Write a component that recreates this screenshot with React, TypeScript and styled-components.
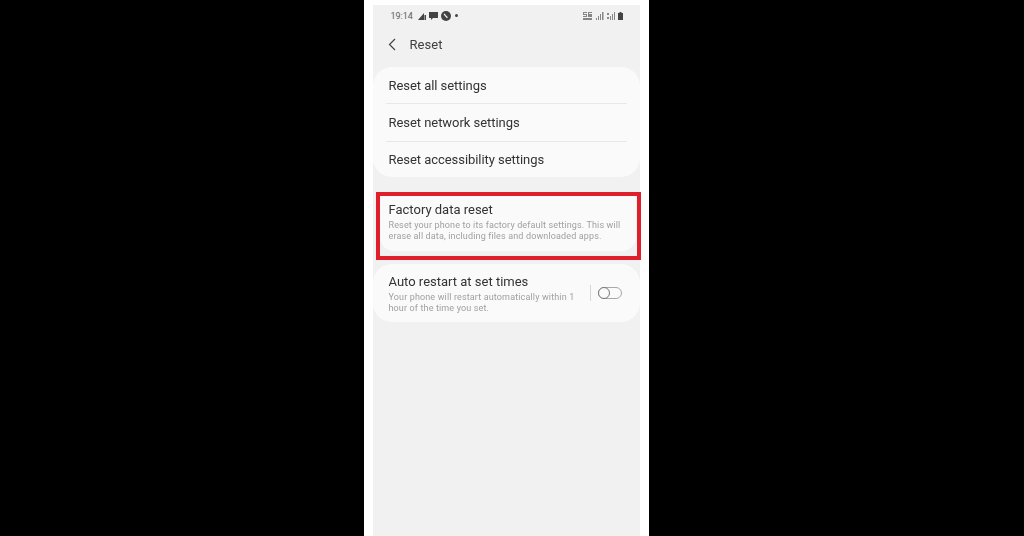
import React from "react";
import styled, { createGlobalStyle } from "styled-components";

const Global = createGlobalStyle`
  html, body { margin: 0; padding: 0; background: #000; }
  body { font-family: Roboto, "Liberation Sans", sans-serif; overflow: hidden; }
`;

const Page = styled.div`
  width: 1024px;
  height: 536px;
  background: #000;
  display: flex;
  justify-content: center;
  padding-right: 12px;
  box-sizing: border-box;
  overflow: hidden;
`;

const PhoneFrame = styled.div`
  width: 285px;
  height: 536px;
  background: #fff;
  padding: 5px 9px 0;
  box-sizing: border-box;
`;

const Screen = styled.div`
  height: 531px;
  background: #f1f1f1;
  display: flex;
  flex-direction: column;
  filter: blur(0.4px);
`;

const StatusBar = styled.div`
  height: 21px;
  display: flex;
  align-items: center;
  justify-content: space-between;
  padding: 0 17px 0 18px;
  color: #555;
  font-size: 9px;
`;

const StatusGroup = styled.div`
  display: flex;
  align-items: center;
  gap: 3px;
`;

const Clock = styled.span`
  margin-right: 2px;
  color: #5c5c5c;
`;

const Dot = styled.svg`
  display: block;
  fill: #444;
  margin-left: 1px;
`;

const Header = styled.div`
  height: 36px;
  display: flex;
  align-items: center;
  padding-left: 15px;
  gap: 14px;
  color: #3f3f3f;
  font-size: 13px;
  letter-spacing: 0.05px;
`;

const Card = styled.section`
  background: #fafafa;
  border-radius: 19px;
  display: flex;
  flex-direction: column;
`;

const TopCard = styled(Card)`
  margin-top: 5px;
  height: 110px;
  padding: 0 13px;
  box-sizing: border-box;
`;

const Row = styled.div<{ $divider?: boolean; $height: number }>`
  height: ${(p) => p.$height}px;
  box-sizing: border-box;
  display: flex;
  align-items: center;
  padding-left: 3px;
  font-size: 13px;
  letter-spacing: -0.05px;
  color: #333;
  border-top: ${(p) => (p.$divider ? "1px solid #e8e8e8" : "none")};
`;

const Highlight = styled.div`
  margin: 15px -1px 0 3px;
  height: 68px;
  border: 4px solid #e01f2d;
  box-sizing: border-box;
  background: #f1f1f1;
  display: flex;
  flex-direction: column;
`;

const FactoryCard = styled.div`
  height: 55px;
  margin-right: 1px;
  padding: 6px 8px 0 9px;
  box-sizing: border-box;
  background: #fafafa;
  border-radius: 0 0 14px 14px;
`;

const Title = styled.div`
  font-size: 13px;
  line-height: 16px;
  letter-spacing: 0;
  color: #333;
`;

const Description = styled.div`
  margin-top: 2px;
  font-size: 9px;
  line-height: 11px;
  letter-spacing: 0.14px;
  color: #9f9f9f;
`;

const AutoCard = styled(Card)`
  margin-top: 4px;
  height: 58px;
  padding: 10px 18px 0 16px;
  box-sizing: border-box;
  flex-direction: row;
  justify-content: space-between;
`;

const AutoText = styled.div`
  width: 190px;
`;

const ToggleArea = styled.div`
  display: flex;
  align-items: center;
  gap: 7px;
  height: 16px;
  margin-top: 11px;
`;

const Rule = styled.div`
  width: 1px;
  height: 16px;
  background: #d6d6d6;
`;

const Toggle = styled.div`
  position: relative;
  width: 24px;
  height: 12px;
  border: 1px solid #a8a8a8;
  border-radius: 7px;
  box-sizing: border-box;
`;

const Knob = styled.div`
  position: absolute;
  left: -1px;
  top: -1px;
  width: 12px;
  height: 12px;
  box-sizing: border-box;
  border: 1px solid #777;
  border-radius: 50%;
  background: #fafafa;
`;

const Icon = styled.svg<{ $faded?: boolean }>`
  display: block;
  fill: #444;
  opacity: ${(p) => (p.$faded ? 0.62 : 1)};
`;

export default function App() {
  return (
    <Page>
      <Global />
      <PhoneFrame>
        <Screen>
          <StatusBar>
            <StatusGroup>
              <Clock>19:14</Clock>
              <Icon width="8" height="8" viewBox="0 0 8 8"><path d="M0 8 L6 1 V8 Z" /><rect x="6.5" y="3" width="1.5" height="5" /></Icon>
              <Icon width="9" height="8" viewBox="0 0 9 8"><path d="M0 0 H9 V6 H4 L2 8 V6 H0 Z" /></Icon>
              <Icon width="10" height="10" viewBox="0 0 9 9"><circle cx="4.5" cy="4.5" r="4.5" /><path d="M2.8 2.5 L4 4.2 L5.8 6" stroke="#f1f1f1" strokeWidth="1.2" fill="none" /></Icon>
              <Dot width="3" height="3" viewBox="0 0 3 3"><circle cx="1.5" cy="1.5" r="1.5" /></Dot>
            </StatusGroup>
            <StatusGroup>
              <Icon $faded width="10" height="8" viewBox="0 0 10 8"><path d="M0 0h4v1H1v1h3v3H0V4h3V3H0zM5 0h4v1H6v1h3v3H5zM0 6h9v2H0z" /></Icon>
              <Icon $faded width="8" height="8" viewBox="0 0 8 8"><path d="M0 6h1v2H0zM2 4h1v4H2zM4 2h1v6H4zM6 0h1.5v8H6z" /></Icon>
              <Icon $faded width="8" height="8" viewBox="0 0 8 8"><path d="M0 1h2v2H0zM0 5h2v2H0zM3 4h1v4H3zM5 2h1v6H5zM7 0h1v8H7z" /></Icon>
              <Icon width="5" height="8" viewBox="0 0 5 8"><path d="M1.5 0h2v1H5v7H0V1h1.5z" /></Icon>
            </StatusGroup>
          </StatusBar>
          <Header>
            <svg width="8" height="13" viewBox="0 0 8 13" fill="none" stroke="#444" strokeWidth="1.2"><path d="M7 1 L1.5 6.5 L7 12" /></svg>
            <span>Reset</span>
          </Header>
          <TopCard>
            <Row $height={36}>Reset all settings</Row>
            <Row $height={38} $divider>Reset network settings</Row>
            <Row $height={36} $divider>Reset accessibility settings</Row>
          </TopCard>
          <Highlight>
            <FactoryCard>
              <Title>Factory data reset</Title>
              <Description>
                Reset your phone to its factory default settings. This will erase all data, including files and downloaded apps.
              </Description>
            </FactoryCard>
          </Highlight>
          <AutoCard>
            <AutoText>
              <Title>Auto restart at set times</Title>
              <Description>Your phone will restart automatically within 1 hour of the time you set.</Description>
            </AutoText>
            <ToggleArea>
              <Rule />
              <Toggle><Knob /></Toggle>
            </ToggleArea>
          </AutoCard>
        </Screen>
      </PhoneFrame>
    </Page>
  );
}
